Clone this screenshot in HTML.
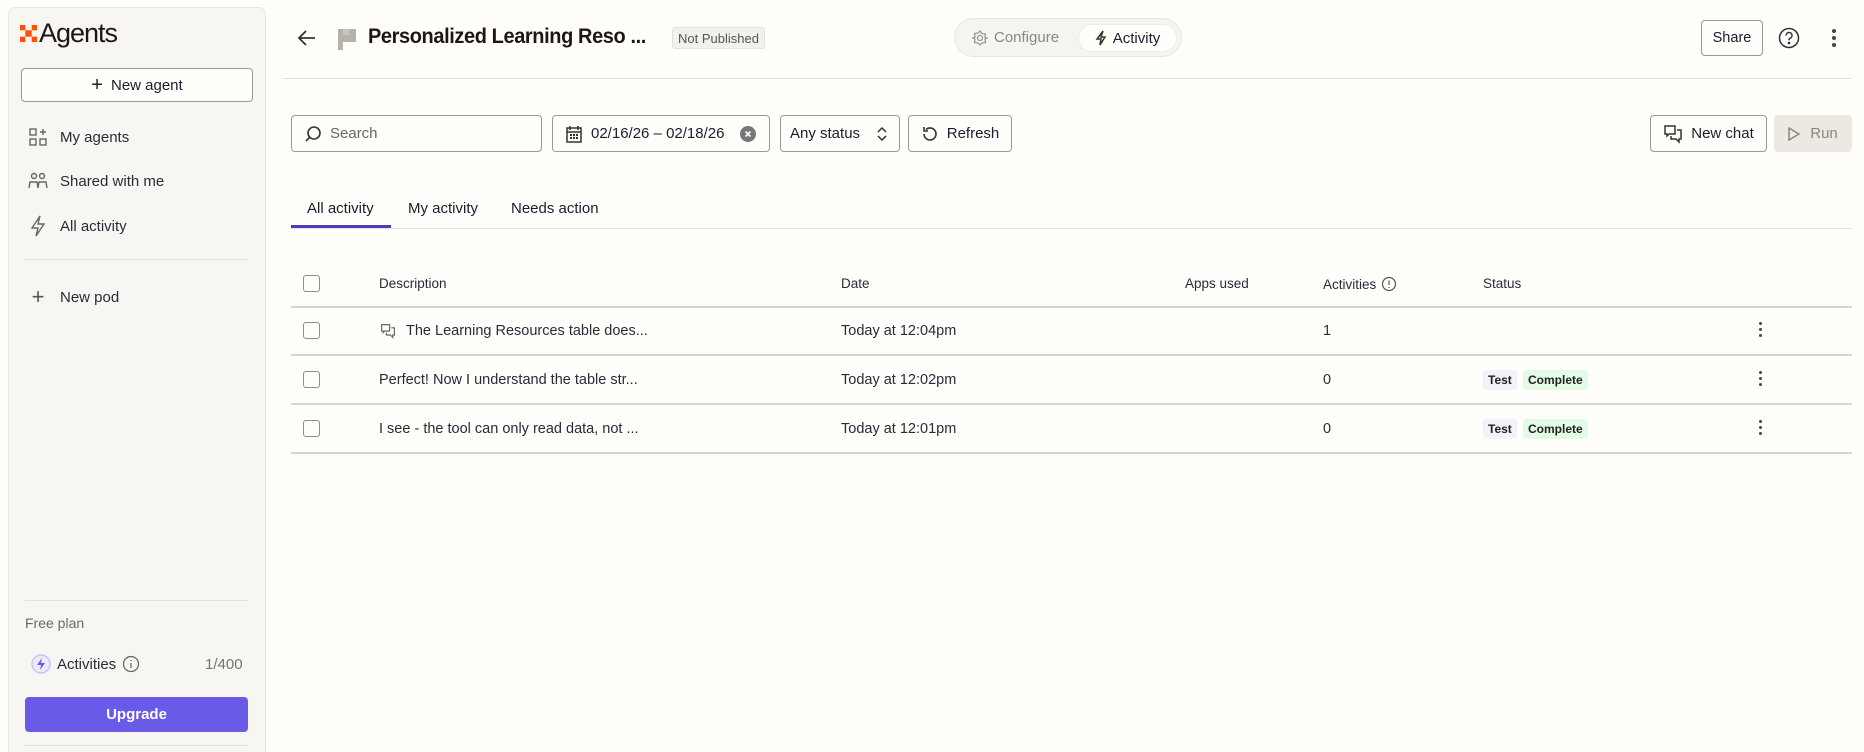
<!DOCTYPE html>
<html><head><meta charset="utf-8"><style>
*{box-sizing:border-box;margin:0;padding:0}
html,body{width:1864px;height:752px;overflow:hidden}
body{background:#fffefb;font-family:"Liberation Sans",sans-serif;color:#2b2358;position:relative;font-size:15px}
.a{position:absolute}
.side{left:8px;top:7px;width:258px;height:745px;background:#f7f6f3;border:1px solid #e8e6df;border-bottom:none;border-radius:8px 8px 0 0}
.btn{position:absolute;border:1px solid #9e9a93;border-radius:4px;background:#fffefb;display:flex;align-items:center;justify-content:center;gap:8px;font-size:15px;color:#1f1b2e}
.nav{position:absolute;left:28px;display:flex;align-items:center;gap:12px;font-size:15px;color:#2b2a35}
.hr{position:absolute;height:1px;background:#e4e2db}
.th{position:absolute;font-size:13.5px;color:#2b2a35;top:276px}
.td{position:absolute;font-size:14.5px;color:#2b2a35}
.cb{position:absolute;left:303px;width:17px;height:17px;border:1.5px solid #8e8b86;border-radius:3px}
.dots{position:absolute;left:1759px;width:4px}
.dots i{display:block;width:3px;height:3px;border-radius:50%;background:#444;margin-bottom:3px}
.tag{position:absolute;font-size:12px;font-weight:bold;padding:3px 5px;border-radius:3px;color:#222}
</style></head><body>
<div class="a side"></div>
<div class="a" style="left:20px;top:18px;display:flex;align-items:center;gap:2px">
<svg width="17" height="17" viewBox="0 0 16 16"><g fill="#ff4f00"><rect x="0" y="0" width="5" height="5"/><rect x="11" y="0" width="5" height="5"/><rect x="0" y="11" width="5" height="5"/><rect x="11" y="11" width="5" height="5"/><rect x="5" y="5" width="6" height="6"/></g></svg>
<span style="font-size:27px;color:#201515;letter-spacing:-1px">Agents</span></div>
<div class="btn" style="left:21px;top:68px;width:232px;height:34px"><span style="font-size:20px;font-weight:300">+</span>New agent</div>
<div class="nav" style="top:127px"><svg width="20" height="20" viewBox="0 0 20 20" fill="none" stroke="#666" stroke-width="1.4"><rect x="2" y="2" width="6" height="6"/><rect x="2" y="12" width="6" height="6"/><rect x="12" y="12" width="6" height="6"/><path d="M15 2v6M12 5h6"/></svg>My agents</div>
<div class="nav" style="top:171px"><svg width="20" height="20" viewBox="0 0 20 20" fill="none" stroke="#666" stroke-width="1.4"><circle cx="6" cy="5" r="2.5"/><circle cx="14" cy="5" r="2.5"/><path d="M1 17l1-6h7l1 6M10 17l1-6h7l1 6"/></svg>Shared with me</div>
<div class="nav" style="top:215px"><svg width="20" height="22" viewBox="0 0 20 22" fill="none" stroke="#666" stroke-width="1.4"><path d="M12 1L4 13h6l-2 8 8-12h-6z"/></svg>All activity</div>
<div class="hr" style="left:25px;top:259px;width:223px"></div>
<div class="nav" style="top:284px"><span style="font-size:22px;font-weight:300;color:#555;width:20px;text-align:center">+</span>New pod</div>
<div class="hr" style="left:25px;top:600px;width:223px"></div>
<div class="a" style="left:25px;top:615px;font-size:14px;color:#6b6862">Free plan</div>
<div class="a" style="left:31px;top:654px;display:flex;align-items:center;gap:6px;font-size:15px;color:#2b2a35">
<svg width="20" height="20" viewBox="0 0 20 20"><circle cx="10" cy="10" r="9" fill="#eeeafd" stroke="#c9c2f7" stroke-width="1.5"/><path d="M11 4L6 11h4l-1 5 5-7h-4z" fill="#695be8"/></svg>Activities
<svg width="18" height="18" viewBox="0 0 18 18" fill="none" stroke="#666" stroke-width="1.3"><circle cx="9" cy="9" r="7.5"/><path d="M9 8v5M9 5v1"/></svg></div>
<div class="a" style="left:205px;top:656px;font-size:15px;color:#77746e">1/400</div>
<div class="a" style="left:25px;top:697px;width:223px;height:35px;background:#695be8;border-radius:4px;color:#fff;font-weight:bold;font-size:15px;display:flex;align-items:center;justify-content:center">Upgrade</div>
<div class="hr" style="left:25px;top:745px;width:223px"></div>

<!-- header -->
<svg class="a" style="left:297px;top:29px" width="20" height="18" viewBox="0 0 20 18" fill="none" stroke="#333" stroke-width="1.8"><path d="M18 9H3M9 2L2 9l7 7"/></svg>
<svg class="a" style="left:337px;top:28px" width="20" height="22" viewBox="0 0 20 22"><path d="M1 1h18v13H6v8H1z" fill="#b5b2ab"/><rect x="6" y="1" width="6" height="6" fill="#c9c6bf"/></svg>
<div class="a" style="left:368px;top:25px;font-size:21px;font-weight:bold;color:#201515;letter-spacing:-0.4px;transform:scaleX(0.95);transform-origin:left">Personalized Learning Reso ...</div>
<div class="a" style="left:672px;top:27px;width:93px;height:22px;background:#f3f1ec;border:1px solid #e4e1da;border-radius:3px;font-size:13px;color:#555;display:flex;align-items:center;justify-content:center">Not Published</div>
<div class="a" style="left:954px;top:18px;width:228px;height:39px;border:1px solid #e8e6df;border-radius:20px;background:#f5f4f0"></div>
<div class="a" style="left:972px;top:29px;font-size:15px;color:#8a8780;display:flex;gap:6px;align-items:center"><svg width="16" height="16" viewBox="0 0 16 16" fill="none" stroke="#999" stroke-width="1.3"><circle cx="8" cy="8" r="2.5"/><path d="M8 1l2 2.5 3.5.5-.5 3.5L15 8l-2 1 .5 3.5-3.5.5L8 15l-2-2-3.5-.5.5-3.5L1 8l2-1-.5-3.5L6 3z"/></svg>Configure</div>
<div class="a" style="left:1078px;top:24px;width:99px;height:28px;background:#fffefb;border-radius:15px;border:1px solid #eeece6;display:flex;align-items:center;justify-content:center;gap:6px;font-size:15px;color:#1f1b2e"><svg width="12" height="16" viewBox="0 0 12 16" fill="none" stroke="#333" stroke-width="1.5"><path d="M8 1L2 9h4l-1 6 5-8H6z"/></svg>Activity</div>
<div class="btn" style="left:1701px;top:20px;width:62px;height:36px;font-size:14.5px">Share</div>
<svg class="a" style="left:1778px;top:27px" width="22" height="22" viewBox="0 0 22 22" fill="none" stroke="#333" stroke-width="1.5"><circle cx="11" cy="11" r="9.5"/><path d="M8 8.5a3 3 0 1 1 4 2.8c-.8.4-1 1-1 2"/><circle cx="11" cy="16" r=".6" fill="#333"/></svg>
<div class="dots" style="left:1832px;top:29px"><i style="width:4px;height:4px"></i><i style="width:4px;height:4px"></i><i style="width:4px;height:4px"></i></div>
<div class="hr" style="left:283px;top:78px;width:1569px"></div>

<!-- toolbar -->
<div class="btn" style="left:291px;top:115px;width:251px;height:37px;justify-content:flex-start;padding-left:12px;color:#666"><svg width="18" height="18" viewBox="0 0 18 18" fill="none" stroke="#333" stroke-width="1.6"><circle cx="10" cy="8" r="6"/><path d="M6 12l-4 4"/></svg>Search</div>
<div class="btn" style="left:552px;top:115px;width:218px;height:37px;justify-content:flex-start;padding-left:12px"><svg width="18" height="18" viewBox="0 0 18 18" fill="none" stroke="#333" stroke-width="1.5"><rect x="2" y="3" width="14" height="14"/><path d="M5 1v4M13 1v4M2 7h14"/><g fill="#333" stroke="none"><rect x="5" y="9" width="2" height="2"/><rect x="8" y="9" width="2" height="2"/><rect x="11" y="9" width="2" height="2"/><rect x="5" y="12" width="2" height="2"/><rect x="8" y="12" width="2" height="2"/><rect x="11" y="12" width="2" height="2"/></g></svg>02/16/26 – 02/18/26<svg style="margin-left:8px" width="16" height="16" viewBox="0 0 16 16"><circle cx="8" cy="8" r="8" fill="#777"/><path d="M5.5 5.5l5 5M10.5 5.5l-5 5" stroke="#fff" stroke-width="1.6"/></svg></div>
<div class="btn" style="left:780px;top:115px;width:120px;height:37px;justify-content:space-between;padding:0 12px 0 9px">Any status<svg width="10" height="14" viewBox="0 0 10 14" fill="none" stroke="#333" stroke-width="1.5"><path d="M1 5l4-4 4 4M1 9l4 4 4-4"/></svg></div>
<div class="btn" style="left:908px;top:115px;width:104px;height:37px"><svg width="18" height="18" viewBox="0 0 18 18" fill="none" stroke="#333" stroke-width="1.6"><path d="M3 9a6 6 0 1 0 2-4.5M3 2v4h4"/></svg>Refresh</div>
<div class="btn" style="left:1650px;top:115px;width:117px;height:37px"><svg width="20" height="20" viewBox="0 0 20 20" fill="none" stroke="#333" stroke-width="1.5"><path d="M2 2h10v8H6l-2 2V10H2zM14 6h4v9h-2v3l-3-3H8v-3"/></svg>New chat</div>
<div class="a" style="left:1774px;top:115px;width:78px;height:37px;background:#ebe9e2;border-radius:4px;display:flex;align-items:center;justify-content:center;gap:10px;font-size:15px;color:#8a8780"><svg width="12" height="14" viewBox="0 0 12 14" fill="none" stroke="#888" stroke-width="1.5"><path d="M1 1l10 6-10 6z"/></svg>Run</div>

<!-- tabs -->
<div class="a" style="left:307px;top:200px;font-size:15px;color:#1f1b2e">All activity</div>
<div class="a" style="left:408px;top:200px;font-size:15px;color:#1f1b2e">My activity</div>
<div class="a" style="left:511px;top:200px;font-size:15px;color:#1f1b2e">Needs action</div>
<div class="hr" style="left:291px;top:228px;width:1561px"></div>
<div class="a" style="left:291px;top:225px;width:100px;height:3px;background:#4a3bbf"></div>

<!-- table -->
<div class="cb" style="top:275px"></div>
<div class="th" style="left:379px">Description</div>
<div class="th" style="left:841px">Date</div>
<div class="th" style="left:1185px">Apps used</div>
<div class="th" style="left:1323px;display:flex;align-items:center;gap:5px">Activities<svg width="16" height="16" viewBox="0 0 16 16" fill="none" stroke="#555" stroke-width="1.2"><circle cx="8" cy="8" r="6.5"/><path d="M8 4.5v4.5M8 11v1"/></svg></div>
<div class="th" style="left:1483px">Status</div>
<div class="hr" style="left:291px;top:306px;width:1561px;background:#d8d5ce;height:1.5px"></div>

<div class="cb" style="top:322px"></div>
<svg class="a" style="left:380px;top:323px" width="16" height="16" viewBox="0 0 20 20" fill="none" stroke="#666" stroke-width="1.5"><path d="M2 2h10v8H6l-2 2V10H2zM14 6h4v9h-2v3l-3-3H8v-3"/></svg>
<div class="td" style="left:406px;top:323px">The Learning Resources table does...</div>
<div class="td" style="left:841px;top:323px">Today at 12:04pm</div>
<div class="td" style="left:1323px;top:323px">1</div>
<div class="dots" style="top:322px"><i></i><i></i><i></i></div>
<div class="hr" style="left:291px;top:354px;width:1561px;background:#d8d5ce;height:1.5px"></div>

<div class="cb" style="top:371px"></div>
<div class="td" style="left:379px;top:372px">Perfect! Now I understand the table str...</div>
<div class="td" style="left:841px;top:372px">Today at 12:02pm</div>
<div class="td" style="left:1323px;top:372px">0</div>
<div class="tag" style="left:1483px;top:370px;background:#f3f2fb">Test</div>
<div class="tag" style="left:1523px;top:370px;background:#e3fbe6">Complete</div>
<div class="dots" style="top:371px"><i></i><i></i><i></i></div>
<div class="hr" style="left:291px;top:403px;width:1561px;background:#d8d5ce;height:1.5px"></div>

<div class="cb" style="top:420px"></div>
<div class="td" style="left:379px;top:421px">I see - the tool can only read data, not ...</div>
<div class="td" style="left:841px;top:421px">Today at 12:01pm</div>
<div class="td" style="left:1323px;top:421px">0</div>
<div class="tag" style="left:1483px;top:419px;background:#f3f2fb">Test</div>
<div class="tag" style="left:1523px;top:419px;background:#e3fbe6">Complete</div>
<div class="dots" style="top:420px"><i></i><i></i><i></i></div>
<div class="hr" style="left:291px;top:452px;width:1561px;background:#d8d5ce;height:1.5px"></div>
</body></html>
